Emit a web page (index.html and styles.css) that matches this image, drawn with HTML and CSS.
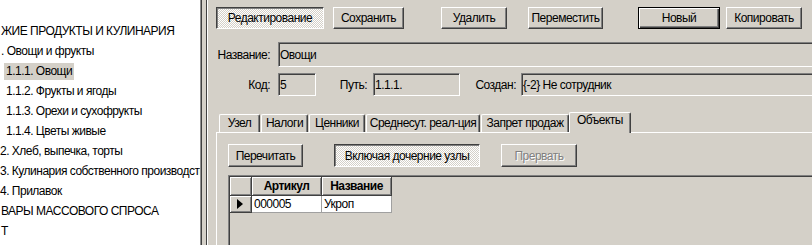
FILE: index.html
```html
<!DOCTYPE html>
<html lang="ru">
<head>
    <meta charset="UTF-8">
    <title>Справочник товаров</title>
    <link rel="stylesheet" href="styles.css">
</head>
<body>
    <div class="app">
        <div class="tree">
            <div class="node lvl1">ЖИЕ ПРОДУКТЫ И КУЛИНАРИЯ</div>
            <div class="node lvl2">. Овощи и фрукты</div>
            <div class="node lvl3 sel"><span>1.1.1. Овощи</span></div>
            <div class="node lvl3"><span>1.1.2. Фрукты и ягоды</span></div>
            <div class="node lvl3"><span>1.1.3. Орехи и сухофрукты</span></div>
            <div class="node lvl3"><span>1.1.4. Цветы живые</span></div>
            <div class="node lvl2 cut">2. Хлеб, выпечка, торты</div>
            <div class="node lvl2 cut">3. Кулинария собственного производства</div>
            <div class="node lvl2 cut">4. Прилавок</div>
            <div class="node lvl1">ВАРЫ МАССОВОГО СПРОСА</div>
            <div class="node lvl1">Т</div>
        </div>
        <div class="splitter"></div>
        <div class="main">
            <div class="toolbar">
                <button class="btn btn-down b-edit">Редактирование</button>
                <button class="btn b-save">Сохранить</button>
                <button class="btn b-del">Удалить</button>
                <button class="btn b-move">Переместить</button>
                <button class="btn btn-default b-new">Новый</button>
                <button class="btn b-copy">Копировать</button>
            </div>

            <div class="row row-name">
                <div class="lbl lbl-main">Название:</div>
                <div class="field f-name">Овощи</div>
            </div>
            <div class="row row-info">
                <div class="lbl lbl-main">Код:</div>
                <div class="field f-code">5</div>
                <div class="lbl lbl-path">Путь:</div>
                <div class="field f-path">1.1.1.</div>
                <div class="lbl lbl-who">Создан:</div>
                <div class="field f-who">{-2} Не сотрудник</div>
            </div>

            <div class="tabs">
                <div class="tab t1">Узел</div>
                <div class="tab t2">Налоги</div>
                <div class="tab t3">Ценники</div>
                <div class="tab t4">Среднесут. реал-ция</div>
                <div class="tab t5">Запрет продаж</div>
                <div class="tab active t6">Объекты</div>
            </div>
            <div class="tab-panel">
                <div class="panel-bar">
                    <button class="btn b-reload">Перечитать</button>
                    <button class="btn btn-down b-sub">Включая дочерние узлы</button>
                    <button class="btn btn-off b-stop">Прервать</button>
                </div>
                <div class="grid">
                    <table>
                        <tr class="head">
                            <th class="ind"></th>
                            <th class="c-art">Артикул</th>
                            <th class="c-name">Название</th>
                        </tr>
                        <tr class="rec">
                            <td class="ind"><span class="arrow"></span></td>
                            <td class="c-art">000005</td>
                            <td class="c-name">Укроп</td>
                        </tr>
                    </table>
                </div>
            </div>
        </div>
    </div>
</body>
</html>
```

FILE: styles.css
```css
* {
    box-sizing: border-box;
}
body {
    margin: 0;
    width: 812px;
    height: 245px;
    overflow: hidden;
    background: #d4d0c8;
    color: #000;
    font-family: "Liberation Sans", Arial, sans-serif;
    font-size: 12px;
    letter-spacing: -0.5px;
}
.app {
    display: flex;
    height: 245px;
}

/* tree */
.tree {
    width: 200px;
    flex: none;
    background: #fff;
    padding-top: 21px;
    overflow: hidden;
    white-space: nowrap;
}
.node {
    height: 20px;
    display: flex;
    align-items: center;
}
.node span {
    padding: 0 2px;
    line-height: 17px;
}
.lvl1 {
    padding-left: 1px;
}
.lvl2 {
    padding-left: 1px;
}
.lvl2.cut {
    padding-left: 0;
}
.lvl3 {
    padding-left: 4px;
}
.sel span {
    background: #d4d0c8;
}

.splitter {
    width: 6px;
    flex: none;
    border-left: 1px solid #909090;
    box-shadow: inset 1px 0 #404040;
}

/* right side */
.main {
    flex: 1;
    min-width: 0;
    border-left: 1px solid #404040;
    box-shadow: inset 1px 0 #fff;
    padding: 7px 0 0 9px;
    overflow: hidden;
}

.btn {
    height: 22px;
    padding: 0;
    font: inherit;
    letter-spacing: inherit;
    color: #000;
    background: #d4d0c8;
    border: 1px solid;
    border-color: #fff #404040 #404040 #fff;
    box-shadow: inset -1px -1px #808080;
}
.btn-down {
    border-color: #404040 #fff #fff #404040;
    box-shadow: inset 1px 1px #808080;
    background-color: #d4d0c8;
    background-image: repeating-conic-gradient(#fff 0 25%, #d4d0c8 0 50%);
    background-size: 2px 2px;
}
.btn-default {
    border-color: #000;
    box-shadow: inset 1px 1px #fff, inset -1px -1px #404040, inset -2px -2px #808080;
}
.btn-off {
    color: #808080;
    text-shadow: 1px 1px #fff;
}

.toolbar {
    display: flex;
    height: 22px;
}
.b-edit { width: 108px; }
.b-save { width: 71px; margin-left: 9px; }
.b-del { width: 66px; margin-left: 37px; }
.b-move { width: 75px; margin-left: 21px; }
.b-new { width: 82px; margin-left: 35px; }
.b-copy { width: 76px; margin-left: 6px; }

.row {
    display: flex;
    align-items: center;
}
.row-name {
    margin-top: 13px;
}
.row-info {
    margin-top: 6px;
}
.lbl {
    text-align: right;
    white-space: nowrap;
}
.lbl-main {
    width: 54px;
    margin-right: 8px;
}
.lbl-path {
    width: 51px;
    margin-right: 6px;
}
.lbl-who {
    width: 56px;
    margin-right: 5px;
}
.field {
    display: flex;
    align-items: center;
    padding-left: 1px;
    background: #d4d0c8;
    border: 1px solid;
    border-color: #808080 #fff #fff #808080;
    box-shadow: inset 1px 1px #404040;
    white-space: nowrap;
}
.f-name {
    height: 25px;
    flex: 1;
    margin-right: -30px;
}
.f-code,
.f-path,
.f-who {
    height: 23px;
}
.f-code { width: 38px; }
.f-path { width: 87px; }
.f-who {
    flex: 1;
    margin-right: -30px;
}

/* tabs */
.tabs {
    display: flex;
    align-items: flex-end;
    height: 20px;
    margin-top: 16px;
    padding-left: 3px;
}
.tab {
    height: 18px;
    margin-right: 1px;
    text-align: center;
    line-height: 16px;
    border-top: 1px solid #fff;
    border-left: 1px solid #fff;
    border-right: 1px solid #404040;
    border-radius: 2px 2px 0 0;
    box-shadow: inset -1px 0 #808080;
    white-space: nowrap;
}
.t1 { width: 41px; }
.t2 { width: 47px; }
.t3 { width: 56px; }
.t4 { width: 114px; }
.t5 { width: 88px; }
.t6 { width: 62px; }
.tab.active {
    position: relative;
    z-index: 1;
    height: 21px;
    margin-bottom: -1px;
    margin-left: -1px;
    line-height: 15px;
    background: #d4d0c8;
}

.tab-panel {
    height: 140px;
    margin-right: -40px;
    border-top: 1px solid #fff;
    border-left: 1px solid #fff;
    padding: 11px 0 0 11px;
}
.panel-bar {
    display: flex;
}
.panel-bar .btn {
    height: 23px;
}
.b-reload { width: 75px; }
.b-sub { width: 146px; margin-left: 31px; }
.b-stop { width: 76px; margin-left: 21px; }

/* grid */
.grid {
    height: 80px;
    margin-top: 8px;
    border-top: 1px solid #808080;
    border-left: 1px solid #808080;
    box-shadow: inset 1px 1px #404040;
    padding: 1px 0 0 1px;
}
.grid table {
    border-collapse: separate;
    border-spacing: 0;
}
.grid th,
.grid td {
    padding: 0 2px;
    white-space: nowrap;
}
.head th {
    height: 19px;
    font-weight: bold;
    text-align: center;
    background: #d4d0c8;
    border-right: 1px solid #404040;
    border-bottom: 1px solid #404040;
    box-shadow: inset 1px 1px #fff, inset -1px -1px #808080;
}
.rec td {
    height: 17px;
    background: #fff;
    border-right: 1px solid #a0a0a0;
    border-bottom: 1px solid #a0a0a0;
}
.grid .ind {
    width: 22px;
}
.rec .ind {
    background: #d4d0c8;
    border-right-color: #404040;
    border-bottom-color: #404040;
    box-shadow: inset 1px 1px #fff, inset -1px -1px #808080;
}
.c-art,
.c-name {
    width: 70px;
}
.arrow {
    display: block;
    width: 0;
    height: 0;
    margin-left: 5px;
    border-top: 5px solid transparent;
    border-bottom: 5px solid transparent;
    border-left: 6px solid #000;
}
```
